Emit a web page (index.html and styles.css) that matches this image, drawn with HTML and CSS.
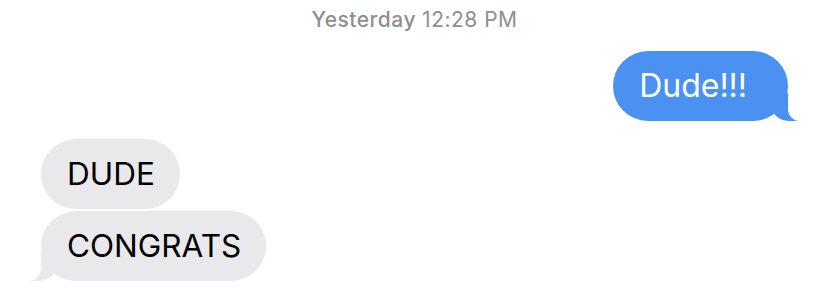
FILE: index.html
```html
<!DOCTYPE html>
<html lang="en">
  <head>
    <meta charset="utf-8">
    <title>Messages</title>
    <link rel="stylesheet" href="styles.css">
  </head>
  <body>
    <div class="thread">
      <div class="stamp">Yesterday <span class="stamp-time">12:28 PM</span></div>

      <div class="bubble sent tail">Dude!!!</div>

      <div class="group">
        <div class="bubble received">DUDE</div>
        <div class="bubble received tail">CONGRATS</div>
      </div>
    </div>
  </body>
</html>
```

FILE: styles.css
```css
body {
  margin: 0;
  background: #fff;
  font-family: "Inter", "Liberation Sans", sans-serif;
}

.thread {
  display: flex;
  flex-direction: column;
  padding: 7px 40px 0 41px;
}

.stamp {
  align-self: center;
  color: #8e8e93;
  font-size: 21px;
  font-weight: 500;
  line-height: 26px;
  letter-spacing: 0.5px;
}

.stamp-time {
  font-weight: 400;
}

.bubble {
  position: relative;
  height: 70px;
  line-height: 70px;
  font-size: 32px;
  border-radius: 35px;
  white-space: nowrap;
}

.sent {
  align-self: flex-end;
  margin-top: 18px;
  padding: 0 41px 0 26px;
  background: #4b91f1;
  color: #fff;
}

.group {
  display: flex;
  flex-direction: column;
  align-items: flex-start;
  gap: 2px;
  margin-top: 18px;
}

.received {
  padding: 0 25px 0 26px;
  background: #e9e9eb;
  color: #000;
  font-size: 31.5px;
}

/* tails */
.tail::before,
.tail::after {
  content: "";
  position: absolute;
  bottom: 0;
  height: 28px;
}

.sent.tail::before {
  right: -10px;
  width: 26px;
  background: #4b91f1;
  border-bottom-left-radius: 18px 14px;
}

.sent.tail::after {
  right: -30px;
  width: 30px;
  background: #fff;
  border-bottom-left-radius: 12px;
}

.received.tail::before {
  left: -11px;
  width: 26px;
  background: #e9e9eb;
  border-bottom-right-radius: 18px 14px;
}

.received.tail::after {
  left: -31px;
  width: 31px;
  background: #fff;
  border-bottom-right-radius: 13px;
}
```
